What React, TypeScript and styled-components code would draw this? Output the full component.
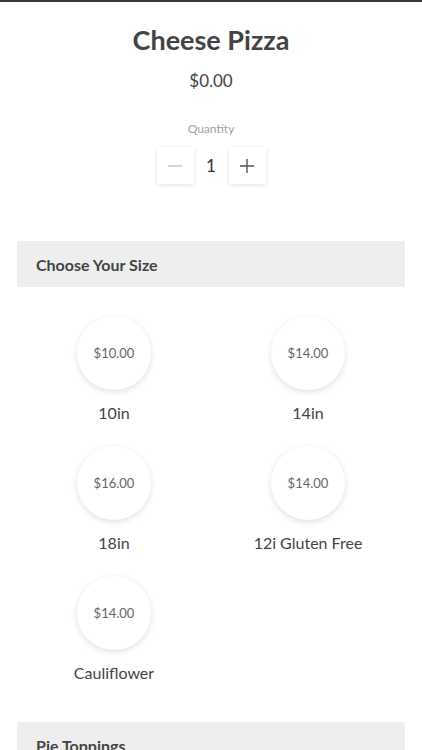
import React, { useState } from 'react';
import styled, { createGlobalStyle } from 'styled-components';

const GlobalStyle = createGlobalStyle`
    html, body {
        margin: 0;
        padding: 0;
        background: #ffffff;
        font-family: Lato, "Noto Sans", "Liberation Sans", sans-serif;
        color: #444444;
    }
`;

const Page = styled.div`
    border-top: 2px solid #3a3a3a;
    padding: 0 17px;
    display: flex;
    flex-direction: column;
    align-items: stretch;
    overflow: hidden;
    height: 748px;
`;

const Title = styled.h1`
    margin: 21px 0 0;
    text-align: center;
    font-size: 27px;
    font-weight: 700;
    line-height: 34px;
    color: #444444;
`;

const Price = styled.div`
    margin-top: 13px;
    text-align: center;
    font-size: 17px;
    line-height: 22px;
    color: #444444;
`;

const QuantityLabel = styled.div`
    margin-top: 29px;
    text-align: center;
    font-size: 12px;
    line-height: 16px;
    color: #a0a0a0;
`;

const Stepper = styled.div`
    margin-top: 10px;
    display: flex;
    justify-content: center;
    align-items: center;
`;

const StepButton = styled.button<{ $disabled?: boolean }>`
    width: 37px;
    height: 37px;
    border: none;
    border-radius: 2px;
    background: #ffffff;
    box-shadow: 0 1px 4px rgba(0, 0, 0, 0.13);
    display: flex;
    align-items: center;
    justify-content: center;
    padding: 0;
    color: ${(p) => (p.$disabled ? '#c4c4c4' : '#555555')};
`;

const Count = styled.span`
    width: 35px;
    text-align: center;
    font-size: 17px;
    color: #333333;
`;

const SectionHeader = styled.div<{ $top: number }>`
    margin-top: ${(p) => p.$top}px;
    height: 46px;
    background: #eeeeee;
    border-radius: 2px;
    display: flex;
    align-items: center;
    padding: 0 19px;
    font-size: 16px;
    font-weight: 700;
    color: #444444;
    flex-shrink: 0;
`;

const SizeGrid = styled.div`
    margin-top: 29px;
    display: grid;
    grid-template-columns: 1fr 1fr;
    row-gap: 22px;
`;

const SizeOption = styled.div`
    display: flex;
    flex-direction: column;
    align-items: center;
    cursor: pointer;
`;

const PriceCircle = styled.div`
    width: 74px;
    height: 74px;
    border-radius: 50%;
    background: #ffffff;
    box-shadow: 0 2px 6px rgba(0, 0, 0, 0.12);
    display: flex;
    align-items: center;
    justify-content: center;
    font-size: 13px;
    color: #666666;
`;

const SizeName = styled.div`
    margin-top: 12px;
    font-size: 16px;
    line-height: 22px;
    color: #444444;
`;

interface ISize {
    name: string;
    price: string;
}

const sizes: ISize[] = [
    { name: '10in', price: '$10.00' },
    { name: '14in', price: '$14.00' },
    { name: '18in', price: '$16.00' },
    { name: '12i Gluten Free', price: '$14.00' },
    { name: 'Cauliflower', price: '$14.00' },
];

const App: React.FC = () => {
    const [qty, setQty] = useState<number>(1);

    return (
        <Page>
            <GlobalStyle />
            <Title>Cheese Pizza</Title>
            <Price>$0.00</Price>
            <QuantityLabel>Quantity</QuantityLabel>
            <Stepper>
                <StepButton $disabled={qty <= 1} onClick={() => setQty(Math.max(1, qty - 1))}>
                    <svg width="16" height="16" viewBox="0 0 16 16">
                        <path d="M1 8h14" stroke="currentColor" strokeWidth="1.4" />
                    </svg>
                </StepButton>
                <Count>{qty}</Count>
                <StepButton onClick={() => setQty(qty + 1)}>
                    <svg width="16" height="16" viewBox="0 0 16 16">
                        <path d="M1 8h14M8 1v14" stroke="currentColor" strokeWidth="1.4" />
                    </svg>
                </StepButton>
            </Stepper>
            <SectionHeader $top={57}>Choose Your Size</SectionHeader>
            <SizeGrid>
                {sizes.map((s) => (
                    <SizeOption key={s.name}>
                        <PriceCircle>{s.price}</PriceCircle>
                        <SizeName>{s.name}</SizeName>
                    </SizeOption>
                ))}
            </SizeGrid>
            <SectionHeader $top={38}>Pie Toppings</SectionHeader>
        </Page>
    );
}

export default App;
